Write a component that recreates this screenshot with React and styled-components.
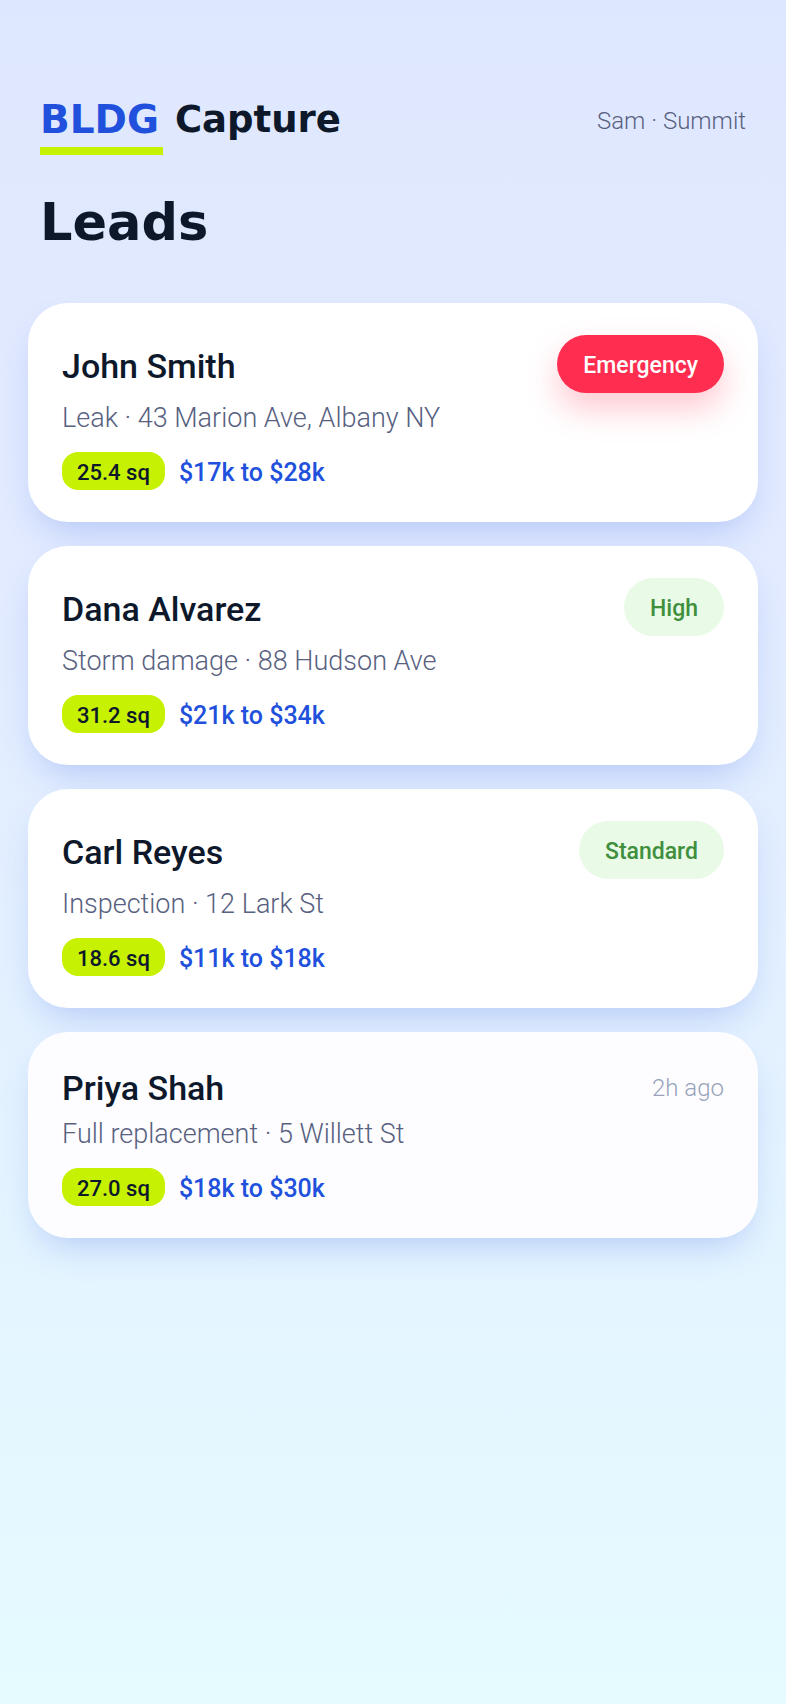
import styled, { createGlobalStyle, css } from "styled-components"

const colors = {
  ink: "#0d182b",
  muted: "#58617f",
  faint: "#97a3bb",
  blue: "#2151dc",
  lime: "#c6f100",
  red: "#ff2d4f",
  green: "#3f8f3d",
  paleGreen: "#e9fae7",
}

const GlobalStyle = createGlobalStyle`
  * {
    box-sizing: border-box;
  }

  body {
    margin: 0;
    font-family: Roboto, "Liberation Sans", sans-serif;
    color: ${colors.ink};
  }
`

const Page = styled.main`
  min-height: 100vh;
  padding: 98px 28px 48px;
  background: linear-gradient(
    180deg,
    #dde8ff 0%,
    #e0e8ff 6%,
    #e2ebff 35%,
    #e4f4ff 72%,
    #e5fbff 100%
  );
`

const Header = styled.header`
  display: flex;
  justify-content: space-between;
  align-items: flex-start;
  padding: 0 12px;
`

const Brand = styled.div`
  display: flex;
  gap: 12px;
  font-family: "DejaVu Sans", sans-serif;
  font-size: 37px;
  font-weight: 700;
  line-height: 44px;
`

const BrandMark = styled.span`
  padding: 0 4px 5px 0;
  border-bottom: 8px solid ${colors.lime};
  color: ${colors.blue};
  font-size: 39px;
`

const User = styled.span`
  color: ${colors.muted};
  font-size: 24px;
  font-weight: 300;
  line-height: 46px;
`

const Title = styled.h1`
  margin: 38px 12px 50px;
  font-family: "DejaVu Sans", sans-serif;
  font-size: 51px;
  font-weight: 700;
  line-height: 60px;
`

const LeadList = styled.ul`
  display: flex;
  flex-direction: column;
  gap: 24px;
  margin: 0;
  padding: 0;
  list-style: none;
`

const Card = styled.li`
  padding: 32px 34px;
  border-radius: 40px;
  background-color: ${(p) => (p.$seen ? "#fdfdff" : "#ffffff")};
  box-shadow: 0 18px 36px -12px rgba(33, 81, 220, 0.26);
`

const CardTop = styled.div`
  display: flex;
  justify-content: space-between;
  align-items: center;
`

const Name = styled.h2`
  margin: 0;
  padding-top: 3px;
  font-size: 34px;
  font-weight: 500;
  line-height: 42px;
`

const tones = {
  alert: css`
    background-color: ${colors.red};
    color: #ffffff;
    box-shadow: 0 16px 32px rgba(255, 45, 79, 0.26);
  `,
  calm: css`
    background-color: ${colors.paleGreen};
    color: ${colors.green};
  `,
}

const Priority = styled.span`
  padding: 3px 26px 0;
  border-radius: 29px;
  font-size: 23px;
  font-weight: 500;
  line-height: 55px;
  ${(p) => tones[p.$tone]}
`

const Time = styled.time`
  padding-top: 3px;
  color: ${colors.faint};
  font-size: 24px;
  font-weight: 300;
`

const Details = styled.p`
  margin: 8px 0 16px;
  color: ${colors.muted};
  font-size: 27px;
  font-weight: 300;
  line-height: 35px;
`

const Estimate = styled.div`
  display: flex;
  align-items: center;
  gap: 14px;
  font-weight: 500;
`

const Squares = styled.span`
  padding: 3px 15px 0;
  border-radius: 16px;
  background-color: ${colors.lime};
  font-size: 22px;
  line-height: 35px;
`

const Price = styled.span`
  padding-top: 3px;
  color: ${colors.blue};
  font-size: 25px;
  line-height: 35px;
`

const leads = [
  {
    name: "John Smith",
    details: "Leak · 43 Marion Ave, Albany NY",
    squares: "25.4 sq",
    price: "$17k to $28k",
    priority: "Emergency",
    tone: "alert",
  },
  {
    name: "Dana Alvarez",
    details: "Storm damage · 88 Hudson Ave",
    squares: "31.2 sq",
    price: "$21k to $34k",
    priority: "High",
    tone: "calm",
  },
  {
    name: "Carl Reyes",
    details: "Inspection · 12 Lark St",
    squares: "18.6 sq",
    price: "$11k to $18k",
    priority: "Standard",
    tone: "calm",
  },
  {
    name: "Priya Shah",
    details: "Full replacement · 5 Willett St",
    squares: "27.0 sq",
    price: "$18k to $30k",
    time: "2h ago",
  },
]

function LeadCard({ lead }) {
  return (
    <Card $seen={!lead.priority}>
      <CardTop>
        <Name>{lead.name}</Name>
        {lead.priority ? (
          <Priority $tone={lead.tone}>{lead.priority}</Priority>
        ) : (
          <Time>{lead.time}</Time>
        )}
      </CardTop>
      <Details>{lead.details}</Details>
      <Estimate>
        <Squares>{lead.squares}</Squares>
        <Price>{lead.price}</Price>
      </Estimate>
    </Card>
  )
}

export default function App() {
  return (
    <>
      <GlobalStyle />
      <Page>
        <Header>
          <Brand>
            <BrandMark>BLDG</BrandMark>
            <span>Capture</span>
          </Brand>
          <User>Sam · Summit</User>
        </Header>
        <Title>Leads</Title>
        <LeadList>
          {leads.map((lead) => (
            <LeadCard key={lead.name} lead={lead} />
          ))}
        </LeadList>
      </Page>
    </>
  )
}
